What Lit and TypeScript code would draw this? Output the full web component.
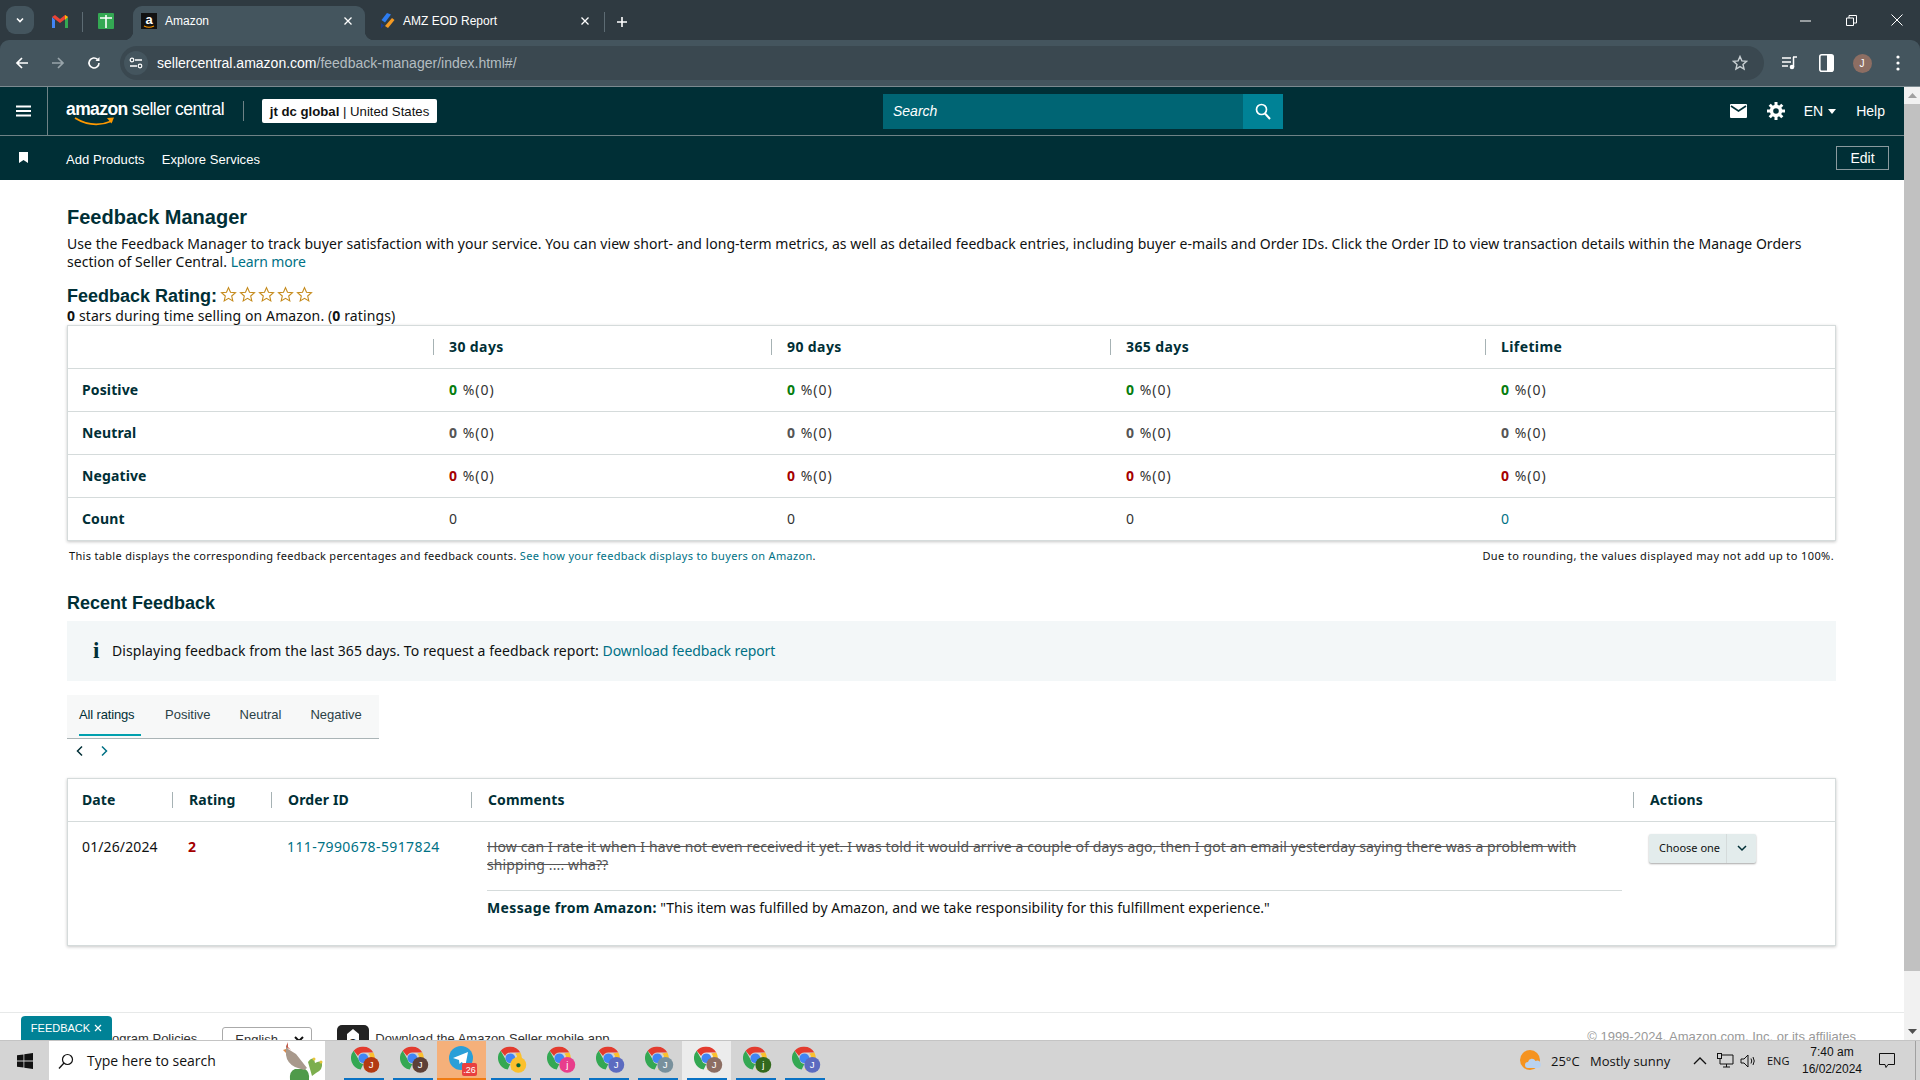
import { LitElement, html, css, svg } from 'lit';
import { customElement } from 'lit/decorators.js';

const star = svg`<path d="M8.5 1.6l2 4.6 5 .5-3.8 3.3 1.1 4.9-4.3-2.6-4.3 2.6 1.1-4.9L1.5 6.7l5-.5z" fill="#fff" stroke="#c58a1a" stroke-width="1.1"/>`;

const chromeIcon = (color: string, letter: string, text = '#fff') => html`
  <svg class="chrome" width="30" height="30" viewBox="0 0 34 34">
    <path d="M14 2a13 13 0 0 1 11.3 6.5H14a6.5 6.5 0 0 0-6 4L3 6.6A13 13 0 0 1 14 2z" fill="#e33b2e"/>
    <path d="M25.3 8.5A13 13 0 0 1 14.5 28l5.2-9a6.5 6.5 0 0 0-.2-9.5z" fill="#fbc02d"/>
    <path d="M3 6.6l5.6 9.7A6.5 6.5 0 0 0 14 21.5L11 27.7A13 13 0 0 1 3 6.6z" fill="#34a853"/>
    <circle cx="14" cy="15" r="5.5" fill="#4285f4"/>
    <circle cx="23" cy="22.5" r="9" fill=${color}/>
    <text x="23" y="26.5" font-size="11" text-anchor="middle" fill=${text} font-family="Liberation Sans, sans-serif">${letter}</text>
  </svg>`;

@customElement('app-root')
export class AppRoot extends LitElement {
  static styles = css`
    :host {
      display: flex;
      flex-direction: column;
      width: 1920px;
      height: 1080px;
      overflow: hidden;
      font-family: 'Liberation Sans', Arial, sans-serif;
      color: #002f36;
      background: #2f3a41;
    }
    svg { display: block; flex: none; }

    /* browser tabs */
    .tabstrip {
      height: 40px;
      background: #2f3a41;
      display: flex;
      align-items: flex-end;
      color: #fff;
      font-size: 12px;
      flex: none;
    }
    .tab-search {
      width: 28px;
      height: 28px;
      margin: 0 0 6px 6px;
      border-radius: 9px;
      background: #44555e;
      display: flex;
      align-items: center;
      justify-content: center;
    }
    .pinned {
      width: 24px;
      height: 34px;
      padding-bottom: 4px;
      box-sizing: border-box;
      display: flex;
      align-items: center;
      justify-content: center;
    }
    .strip-sep { width: 1px; height: 20px; background: #5d6b73; margin-bottom: 8px; }
    .tab {
      width: 232px;
      height: 34px;
      display: flex;
      align-items: center;
      padding: 0 12px 4px 8px;
      box-sizing: border-box;
      gap: 8px;
      position: relative;
    }
    .tab.second { width: 229px; padding-right: 10px; margin-left: 6px; }
    .tab.active { background: #44555e; border-radius: 9px 9px 0 0; margin-left: 15px; }
    .tab.active::before, .tab.active::after {
      content: '';
      position: absolute;
      bottom: 0;
      width: 9px;
      height: 9px;
    }
    .tab.active::before { left: -9px; background: radial-gradient(circle at 0 0, transparent 9px, #44555e 9.5px); }
    .tab.active::after { right: -9px; background: radial-gradient(circle at 100% 0, transparent 9px, #44555e 9.5px); }
    .tab-title { flex: 1; }
    .new-tab { margin: 0 0 12px 11px; }
    .win-controls { margin-left: auto; display: flex; align-self: flex-start; }
    .win-btn { width: 46px; height: 40px; display: flex; align-items: center; justify-content: center; }

    /* browser toolbar */
    .toolbar {
      height: 46px;
      background: #44555e;
      border-radius: 9px 9px 0 0;
      display: flex;
      align-items: center;
      flex: none;
      border-bottom: 1px solid #7c8a90;
      color: #fff;
    }
    .nav-btn { width: 36px; display: flex; justify-content: center; }
    .nav-btn:first-child { margin-left: 4px; }
    .omnibox {
      width: 1644px;
      height: 34px;
      margin-left: 8px;
      border-radius: 17px;
      background: #3a4850;
      display: flex;
      align-items: center;
      font-size: 14px;
      box-sizing: border-box;
    }
    .site-info {
      width: 24px;
      height: 24px;
      margin: 0 9px 0 4px;
      border-radius: 50%;
      background: #44555e;
      display: flex;
      align-items: center;
      justify-content: center;
    }
    .url-path { color: #b4bdc1; }
    .omni-star { margin-left: auto; margin-right: 16px; }
    .tool-btn { width: 36px; display: flex; justify-content: center; }
    .tool-btn.first { margin-left: 8px; }
    .avatar {
      width: 19px;
      height: 19px;
      border-radius: 50%;
      background: #8d6e63;
      font-size: 10px;
      display: flex;
      align-items: center;
      justify-content: center;
    }

    /* page area */
    .viewport { flex: 1; min-height: 0; display: flex; position: relative; background: #fff; }
    .page { flex: 1; min-width: 0; overflow: hidden; display: flex; flex-direction: column; }
    .scrollbar {
      width: 16px;
      background: #f1f1f1;
      display: flex;
      flex-direction: column;
      align-items: center;
      flex: none;
    }
    .scroll-arrow { height: 17px; display: flex; align-items: center; justify-content: center; }
    .thumb { width: 16px; height: 867px; background: #c1c1c1; }
    .scroll-arrow.down { margin-top: auto; }

    /* seller central header */
    .topbar {
      height: 48px;
      background: #002f36;
      border-bottom: 1px solid #6e8286;
      display: flex;
      align-items: center;
      color: #fff;
      flex: none;
    }
    .menu {
      width: 47px;
      height: 48px;
      border-right: 1px solid #6e8286;
      display: flex;
      align-items: center;
      justify-content: center;
      flex: none;
    }
    .logo { margin-left: 18px; position: relative; width: 160px; height: 32px; flex: none; }
    .logo-text { font-size: 17.5px; line-height: 24px; margin-top: 2px; letter-spacing: -0.5px; white-space: nowrap; }
    .logo-text b { letter-spacing: -0.6px; }
    .logo-smile { position: absolute; left: 8px; top: 21px; }
    .logo-sep { width: 1px; height: 20px; background: #6e8286; margin-left: 17px; }
    .account {
      margin-left: 18px;
      width: 175px;
      height: 24px;
      border-radius: 2px;
      background: #fff;
      color: #111;
      font-size: 13.2px;
      display: flex;
      align-items: center;
      justify-content: center;
      white-space: pre;
    }
    .search {
      margin-left: 446px;
      width: 400px;
      height: 35px;
      background: #006574;
      display: flex;
      flex: none;
    }
    .search-input { flex: 1; padding-left: 10px; font-size: 14px; font-style: italic; color: #fff; line-height: 35px; }
    .search-btn { width: 40px; background: #008296; display: flex; align-items: center; justify-content: center; }
    .top-right { margin-left: auto; display: flex; align-items: center; font-size: 14px; padding-right: 19px; }
    .lang { display: flex; align-items: center; gap: 4px; margin-left: 19px; }
    .caret { width: 0; height: 0; border: 4px solid transparent; border-top: 5px solid #fff; border-bottom: 0; margin-left: 1px; }
    .help { margin-left: 20px; }
    .gear { margin-left: 20px; }

    .subbar {
      height: 44px;
      background: #002f36;
      color: #fff;
      display: flex;
      align-items: center;
      font-size: 13px;
      flex: none;
      padding: 2px 0 0 19px;
      box-sizing: border-box;
    }
    .subbar span { margin-right: 17px; letter-spacing: 0.05px; }
    .bookmark { margin-right: 38px; margin-top: -3px; }
    .edit {
      margin-left: auto;
      margin-right: 15px;
      margin-top: -3px;
      width: 53px;
      height: 24px;
      box-sizing: border-box;
      border: 1px solid #8a9a9e;
      font-size: 14px;
      display: flex;
      align-items: center;
      justify-content: center;
    }

    /* content */
    .content {
      flex: none;
      padding: 25px 68px 0 67px;
      font-family: 'Noto Sans', sans-serif;
      font-size: 14px;
      line-height: 18px;
      color: #0f1111;
      height: 832px;
      box-sizing: border-box;
      letter-spacing: 0.12px;
    }
    h1, h2 { margin: 0; font-family: 'Liberation Sans', sans-serif; font-weight: 700; color: #002f36; letter-spacing: 0; }
    h1 { font-size: 20px; line-height: 24px; }
    h2 { font-size: 18px; line-height: 24px; }
    a { color: #007185; text-decoration: none; }
    .intro a, .info a { letter-spacing: -0.1px; }
    .intro { margin: 6px 0 0; letter-spacing: 0.04px; }
    .rating { margin-top: 13px; display: flex; align-items: center; gap: 3px; }
    .stars { display: flex; gap: 2px; margin-top: -4px; }
    .summary { margin-top: -1px; }

    .card {
      background: #fff;
      border: 1px solid #d5dbdb;
      box-shadow: 0 1px 3px rgba(0, 0, 0, 0.22);
    }
    .row { display: grid; height: 43px; border-bottom: 1px solid #d5dbdb; box-sizing: border-box; align-items: center; }
    .row:last-child { border-bottom: 0; }
    .metrics .row { grid-template-columns: 365px 338px 339px 375px 1fr; }
    .metrics .row:last-child { height: 42px; }
    .metrics .th { letter-spacing: 0.4px; }
    .th { font-weight: 700; color: #002f36; }
    .cell-head { border-left: 1px solid #a6b2b4; padding-left: 15px; height: 16px; line-height: 16px; }
    .label { padding-left: 14px; font-weight: 700; color: #002f36; }
    .val { padding-left: 16px; color: #333; letter-spacing: 1px; }
    .good { color: #067d0e; font-weight: 700; }
    .plain { color: #555; font-weight: 700; }
    .bad { color: #a50000; font-weight: 700; }

    .notes {
      display: flex;
      justify-content: space-between;
      margin-top: 6px;
      padding: 0 2px;
      font-size: 11px;
      letter-spacing: 0.32px;
    }
    .notes div:last-child { letter-spacing: 0.4px; }
    .recent { margin-top: 26px; }
    .info {
      margin-top: 6px;
      height: 60px;
      background: #f3f7f8;
      display: flex;
      align-items: center;
      padding-left: 26px;
      letter-spacing: 0.07px;
    }
    .info-i {
      font-family: 'Liberation Serif', serif;
      font-weight: 700;
      font-size: 23px;
      color: #002f36;
      width: 19px;
    }
    .tabs {
      margin-top: 14px;
      width: 312px;
      height: 44px;
      background: #f7f8f8;
      border-bottom: 1px solid #aab4b6;
      display: flex;
      box-sizing: border-box;
      font-family: 'Liberation Sans', sans-serif;
      font-size: 13px;
      color: #2b4146;
      padding-left: 12px;
      gap: 29px;
      letter-spacing: 0;
    }
    .rt { height: 39px; line-height: 39px; box-sizing: border-box; }
    .rt.on { color: #002f36; box-shadow: 0 2px 0 #00a0ae; width: 62px; margin-right: -5px; letter-spacing: -0.15px; }
    .pager { display: flex; gap: 14px; padding-left: 8px; height: 24px; align-items: center; }

    .table2 { margin-top: 15px; height: 168px; box-sizing: border-box; }
    .table2 .row, .entry { grid-template-columns: 104px 99px 200px 1162px 1fr; }
    .table2 .cell-head:first-child { border-left: 0; padding-left: 14px; }
    .table2 .cell-head { padding-left: 16px; }
    .entry { display: grid; padding-top: 16px; }
    .entry > div { padding-left: 16px; }
    .entry > div:first-child { padding-left: 14px; }
    .order { letter-spacing: 0.4px; }
    .struck { text-decoration: line-through; color: #555; }
    .entry > .comment { padding-right: 11px; }
    .comment hr { border: 0; border-top: 1px solid #d5dbdb; margin: 16px 0 0; }
    .from { margin-top: 8px; letter-spacing: 0; }
    .from b { color: #002f36; letter-spacing: 0.35px; }
    .rate-val { color: #a50000; font-weight: 700; }
    .choose {
      width: 107px;
      height: 29px;
      margin-top: -4px;
      background: #e3ecec;
      border-radius: 2px;
      box-shadow: 0 1px 2px rgba(0, 0, 0, 0.35);
      display: flex;
      font-size: 11px;
      letter-spacing: 0;
      line-height: 28px;
    }
    .choose-text { width: 78px; padding-left: 10px; box-sizing: border-box; border-right: 1px solid #d5dbdb; }
    .choose-arrow { flex: 1; display: flex; align-items: center; justify-content: center; }

    .footer {
      flex: none;
      border-top: 1px solid #e7e9e9;
      height: 120px;
      padding: 18px 48px 0 99px;
      display: flex;
      align-items: flex-start;
      font-size: 13px;
      color: #333;
      box-sizing: border-box;
    }
    .sel {
      margin: -4px 0 0 25px;
      width: 90px;
      height: 24px;
      box-sizing: border-box;
      border: 1px solid #aaa;
      border-radius: 3px;
      padding: 3px 7px 0 12px;
      line-height: 18px;
      display: flex;
      justify-content: space-between;
    }
    .sel svg { margin-top: 5px; }
    .app-a { margin: -6px 6px 0 25px; }
    .copy { margin: -2px 0 0 auto; color: #999; }

    .feedback {
      position: absolute;
      left: 21px;
      bottom: 0;
      width: 91px;
      height: 24px;
      background: #008296;
      color: #fff;
      border-radius: 4px 4px 0 0;
      font-size: 11px;
      display: flex;
      align-items: center;
      justify-content: center;
      gap: 4px;
    }

    /* windows taskbar */
    .taskbar {
      height: 40px;
      background: #d4d4d4;
      display: flex;
      align-items: center;
      flex: none;
      border-top: 1px solid #c4c4c4;
      box-sizing: border-box;
      font-family: 'Open Sans', 'Noto Sans', sans-serif;
      color: #111;
    }
    .start { width: 49px; display: flex; justify-content: center; flex: none; }
    .task-search {
      width: 276px;
      height: 39px;
      background: #fff;
      display: flex;
      align-items: center;
      font-size: 14px;
      padding-left: 9px;
      box-sizing: border-box;
      gap: 13px;
      position: relative;
      flex: none;
    }
    .bird { position: absolute; right: 0; top: 0; }
    .apps { display: flex; margin-left: 14px; flex: none; }
    .app {
      width: 49px;
      height: 39px;
      display: flex;
      align-items: center;
      justify-content: center;
      box-sizing: border-box;
      background: linear-gradient(#0a72c4, #0a72c4) bottom center / 40px 2px no-repeat;
      padding-left: 5px;
    }
    .app .chrome { margin-top: -2px; }
    .app.tg {
      background: linear-gradient(#f07b12, #f07b12) bottom center / 100% 2px no-repeat, #f5b07a;
      padding-left: 0;
    }
    .app.sel-app { background: linear-gradient(#0a72c4, #0a72c4) bottom center / 40px 2px no-repeat, #ececec; }
    .tray { margin-left: auto; display: flex; align-items: center; font-size: 13px; height: 39px; }
    .sun { margin-right: 9px; }
    .weather { width: 39px; }
    .mostly { width: 98px; }
    .tray-ic { display: flex; justify-content: center; }
    .eng { font-size: 11px; margin: 0 5px 0 9px; width: 23px; }
    .clock { font-family: 'Liberation Sans', sans-serif; font-size: 12px; line-height: 17px; text-align: center; width: 74px; }
    .notify { width: 36px; display: flex; justify-content: center; }
    .show-desktop { width: 1px; height: 39px; background: #a0a0a0; margin: 0 4px 0 10px; }
  `;

  renderMetricRow(label: string, cls: string) {
    return html`<div class="row">
      <div class="label">${label}</div>
      ${[0, 1, 2, 3].map(() => html`<div class="val"><span class=${cls}>0</span> %(0)</div>`)}
    </div>`;
  }

  renderChrome() {
    return html`
      <div class="tabstrip">
        <div class="tab-search">
          <svg width="12" height="12" viewBox="0 0 12 12"><path d="M3 4.5l3 3 3-3" fill="none" stroke="#fff" stroke-width="1.6"/></svg>
        </div>
        <div class="pinned" style="margin-left:14px">
          <svg width="16" height="13" viewBox="0 0 16 13">
            <path d="M0 2v11h3V5z" fill="#4285f4"/><path d="M16 2v11h-3V5z" fill="#34a853"/>
            <path d="M0 2l3-2 5 4 5-4 3 2-8 6z" fill="#ea4335"/><path d="M13 0l3 2-3 3z" fill="#fbbc04"/>
          </svg>
        </div>
        <div class="strip-sep" style="margin-left:10px"></div>
        <div class="pinned" style="margin-left:11px">
          <svg width="16" height="16" viewBox="0 0 16 16"><rect width="16" height="16" rx="1" fill="#34a853"/><path d="M2 5h12M8 2v13" stroke="#fff" stroke-width="1.6"/></svg>
        </div>
        <div class="tab active">
          <svg width="16" height="16" viewBox="0 0 16 16"><rect width="16" height="16" fill="#111"/><text x="8" y="11" font-size="13" font-weight="700" text-anchor="middle" fill="#fff" font-family="Liberation Sans">a</text><path d="M3 13q5 2.5 10 0" fill="none" stroke="#f90" stroke-width="1.2"/></svg>
          <span class="tab-title">Amazon</span>
          <svg width="10" height="10" viewBox="0 0 10 10"><path d="M1.5 1.5l7 7M8.5 1.5l-7 7" stroke="#fff" stroke-width="1.3"/></svg>
        </div>
        <div class="tab second">
          <svg width="16" height="18" viewBox="0 0 16 18">
            <path d="M8 1l4 1.5-6 8L2.5 8z" fill="#2d7cf0"/><path d="M13 6l2.5 2-6.500 8-3-2z" fill="#f59a23"/><path d="M2 11l3 2.5-3 3z" fill="#1b3b8f"/>
          </svg>
          <span class="tab-title">AMZ EOD Report</span>
          <svg width="10" height="10" viewBox="0 0 10 10"><path d="M1.5 1.5l7 7M8.5 1.5l-7 7" stroke="#fff" stroke-width="1.3"/></svg>
        </div>
        <div class="strip-sep" style="margin-left:4px"></div>
        <svg class="new-tab" width="12" height="12" viewBox="0 0 12 12"><path d="M6 1v10M1 6h10" stroke="#fff" stroke-width="1.6"/></svg>
        <div class="win-controls">
          <div class="win-btn"><svg width="11" height="11" viewBox="0 0 11 11"><path d="M0 6h11" stroke="#fff"/></svg></div>
          <div class="win-btn"><svg width="11" height="11" viewBox="0 0 11 11"><path d="M.5 3h7v7.5h-7zM3 3V.5h7.5V8H8" fill="none" stroke="#fff"/></svg></div>
          <div class="win-btn"><svg width="12" height="12" viewBox="0 0 12 12"><path d="M.5.5l11 11M11.5.5l-11 11" stroke="#fff"/></svg></div>
        </div>
      </div>
      <div class="toolbar">
        <div class="nav-btn"><svg width="14" height="14" viewBox="0 0 14 14"><path d="M13 7H2M7 2L2 7l5 5" fill="none" stroke="#fff" stroke-width="1.7"/></svg></div>
        <div class="nav-btn"><svg width="14" height="14" viewBox="0 0 14 14"><path d="M1 7h11M7 2l5 5-5 5" fill="none" stroke="#98a4aa" stroke-width="1.7"/></svg></div>
        <div class="nav-btn"><svg width="14" height="14" viewBox="0 0 14 14"><path d="M12 7a5 5 0 1 1-1.5-3.6" fill="none" stroke="#fff" stroke-width="1.6"/><path d="M12.5 1v4h-4z" fill="#fff"/></svg></div>
        <div class="omnibox">
          <div class="site-info">
            <svg width="14" height="12" viewBox="0 0 14 12"><circle cx="3" cy="3" r="1.8" fill="none" stroke="#fff" stroke-width="1.2"/><path d="M6 3h7M1 9h7" stroke="#fff" stroke-width="1.4"/><circle cx="11" cy="9" r="1.8" fill="none" stroke="#fff" stroke-width="1.2"/></svg>
          </div>
          <span>sellercentral.amazon.com<span class="url-path">/feedback-manager/index.html#/</span></span>
          <svg class="omni-star" width="16" height="16" viewBox="0 0 17 17"><path d="M8.5 1.6l2 4.6 5 .5-3.8 3.3 1.1 4.9-4.3-2.6-4.3 2.6 1.1-4.9L1.5 6.7l5-.5z" fill="none" stroke="#c9d0d3" stroke-width="1.5"/></svg>
        </div>
        <div class="tool-btn first"><svg width="16" height="14" viewBox="0 0 16 14"><path d="M0 2h9M0 6h9M0 10h6" stroke="#fff" stroke-width="1.5"/><path d="M11 1h4M11.5 1v10" stroke="#fff" stroke-width="1.5"/><circle cx="10" cy="11" r="2.3" fill="#fff"/></svg></div>
        <div class="tool-btn"><svg width="15" height="18" viewBox="0 0 15 18"><rect x=".8" y=".8" width="13.4" height="16.4" rx="2" fill="none" stroke="#fff" stroke-width="1.6"/><rect x="8" y="1" width="6" height="16" fill="#fff"/></svg></div>
        <div class="tool-btn"><div class="avatar">J</div></div>
        <div class="tool-btn"><svg width="4" height="16" viewBox="0 0 4 16"><circle cx="2" cy="2" r="1.6" fill="#fff"/><circle cx="2" cy="8" r="1.6" fill="#fff"/><circle cx="2" cy="14" r="1.6" fill="#fff"/></svg></div>
      </div>`;
  }

  renderHeader() {
    return html`
      <div class="topbar">
        <div class="menu"><svg width="15" height="12" viewBox="0 0 15 12"><path d="M0 1.5h15M0 6h15M0 10.5h15" stroke="#fff" stroke-width="2"/></svg></div>
        <div class="logo">
          <div class="logo-text"><b>amazon</b> seller central</div>
          <svg class="logo-smile" width="44" height="11" viewBox="0 0 44 11"><path d="M1 2q18 11 37 3" fill="none" stroke="#f90" stroke-width="1.8"/><path d="M33 2l7-.5-2.5 6z" fill="#f90"/></svg>
        </div>
        <div class="logo-sep"></div>
        <div class="account"><b>jt dc global</b> | United States</div>
        <div class="search">
          <div class="search-input">Search</div>
          <div class="search-btn"><svg width="16" height="17" viewBox="0 0 16 17"><circle cx="6.5" cy="6.5" r="5" fill="none" stroke="#fff" stroke-width="1.7"/><path d="M10 10.5l5 5.5" stroke="#fff" stroke-width="2"/></svg></div>
        </div>
        <div class="top-right">
          <svg width="17" height="14" viewBox="0 0 17 14"><rect width="17" height="14" rx="1" fill="#fff"/><path d="M1 2l7.5 5L16 2" fill="none" stroke="#002f36" stroke-width="1.6"/></svg>
          <svg class="gear" width="18" height="18" viewBox="0 0 18 18"><circle cx="9" cy="9" r="4.5" fill="none" stroke="#fff" stroke-width="3.4"/><path d="M9 0v4M9 14v4M0 9h4M14 9h4M2.7 2.7l2.8 2.8M12.5 12.5l2.8 2.8M15.3 2.7l-2.8 2.8M5.5 12.5l-2.8 2.8" stroke="#fff" stroke-width="3"/></svg>
          <div class="lang">EN <span class="caret"></span></div>
          <div class="help">Help</div>
        </div>
      </div>
      <div class="subbar">
        <svg class="bookmark" width="9" height="11" viewBox="0 0 9 11"><path d="M0 0h9v11L4.5 8 0 11z" fill="#fff"/></svg>
        <span>Add Products</span>
        <span>Explore Services</span>
        <div class="edit">Edit</div>
      </div>`;
  }

  renderContent() {
    return html`
      <div class="content">
        <h1>Feedback Manager</h1>
        <p class="intro">Use the Feedback Manager to track buyer satisfaction with your service. You can view short- and long-term metrics, as well as detailed feedback entries, including buyer e-mails and Order IDs. Click the Order ID to view transaction details within the Manage Orders section of Seller Central. <a>Learn more</a></p>
        <div class="rating">
          <h2>Feedback Rating:</h2>
          <div class="stars">${[0, 1, 2, 3, 4].map(() => html`<svg width="17" height="17" viewBox="0 0 17 17">${star}</svg>`)}</div>
        </div>
        <div class="summary"><b>0</b> stars during time selling on Amazon. (<b>0</b> ratings)</div>

        <div class="card metrics">
          <div class="row th">
            <div></div>
            <div class="cell-head">30 days</div>
            <div class="cell-head">90 days</div>
            <div class="cell-head">365 days</div>
            <div class="cell-head">Lifetime</div>
          </div>
          ${this.renderMetricRow('Positive', 'good')}
          ${this.renderMetricRow('Neutral', 'plain')}
          ${this.renderMetricRow('Negative', 'bad')}
          <div class="row">
            <div class="label">Count</div>
            <div class="val">0</div>
            <div class="val">0</div>
            <div class="val">0</div>
            <div class="val"><a>0</a></div>
          </div>
        </div>
        <div class="notes">
          <div>This table displays the corresponding feedback percentages and feedback counts. <a>See how your feedback displays to buyers on Amazon</a>.</div>
          <div>Due to rounding, the values displayed may not add up to 100%.</div>
        </div>

        <h2 class="recent">Recent Feedback</h2>
        <div class="info">
          <span class="info-i">i</span>
          <span>Displaying feedback from the last 365 days. To request a feedback report: <a>Download feedback report</a></span>
        </div>
        <div class="tabs">
          <div class="rt on">All ratings</div>
          <div class="rt">Positive</div>
          <div class="rt">Neutral</div>
          <div class="rt">Negative</div>
        </div>
        <div class="pager">
          <svg width="10" height="12" viewBox="0 0 10 12"><path d="M7 1.5L2.5 6 7 10.5" fill="none" stroke="#002f36" stroke-width="1.5"/></svg>
          <svg width="10" height="12" viewBox="0 0 10 12"><path d="M3 1.5L7.5 6 3 10.5" fill="none" stroke="#007185" stroke-width="1.5"/></svg>
        </div>

        <div class="card table2">
          <div class="row th">
            <div class="cell-head">Date</div>
            <div class="cell-head">Rating</div>
            <div class="cell-head">Order ID</div>
            <div class="cell-head">Comments</div>
            <div class="cell-head">Actions</div>
          </div>
          <div class="entry">
            <div>01/26/2024</div>
            <div class="rate-val">2</div>
            <div class="order"><a>111-7990678-5917824</a></div>
            <div class="comment">
              <div class="struck">How can I rate it when I have not even received it yet. I was told it would arrive a couple of days ago, then I got an email yesterday saying there was a problem with shipping .... wha??</div>
              <hr />
              <div class="from"><b>Message from Amazon:</b> "This item was fulfilled by Amazon, and we take responsibility for this fulfillment experience."</div>
            </div>
            <div class="actions">
              <div class="choose">
                <div class="choose-text">Choose one</div>
                <div class="choose-arrow"><svg width="10" height="7" viewBox="0 0 10 7"><path d="M1 1l4 4 4-4" fill="none" stroke="#002f36" stroke-width="1.5"/></svg></div>
              </div>
            </div>
          </div>
        </div>
      </div>`;
  }

  renderTaskbar() {
    return html`
      <div class="taskbar">
        <div class="start"><svg width="16" height="16" viewBox="0 0 16 16"><path d="M0 2.3l6.5-.9v6.2H0zM7.3 1.3L16 0v7.6H7.3zM0 8.4h6.500v6.200L0 13.700zM7.300 8.400H16V16l-8.700-1.200z" fill="#111"/></svg></div>
        <div class="task-search">
          <svg width="16" height="16" viewBox="0 0 16 16"><circle cx="9.5" cy="6.5" r="5" fill="none" stroke="#111" stroke-width="1.2"/><path d="M6 10l-5 5.5" stroke="#111" stroke-width="1.3"/></svg>
          <span>Type here to search</span>
          <svg class="bird" width="47" height="39" viewBox="0 0 47 39">
            <path d="M30 21q3-5 6-3l1 4q5-3 7 0 1 7-6 10l-4 3z" fill="#7cae4e"/>
            <circle cx="36" cy="18" r="1.5" fill="#e8c63a"/><circle cx="43" cy="21" r="1.5" fill="#e8c63a"/>
            <path d="M12 39q-1-9 5-11h10q5 3 4 11z" fill="#4f9a4a"/>
            <path d="M8 3l2 5 8 5 11 14-3 2-9-3q-8-4-9-12z" fill="#a8998c"/>
            <path d="M10 1L8 6l5 3-3-3z" fill="#c65a4a"/>
            <path d="M8 8l-3 1 3 3z" fill="#d98a4a"/>
          </svg>
        </div>
        <div class="apps">
          <div class="app">${chromeIcon('#b33a12', 'J')}</div>
          <div class="app">${chromeIcon('#5d4037', 'J')}</div>
          <div class="app tg">
            <svg width="30" height="32" viewBox="0 0 30 32">
              <circle cx="14" cy="13" r="12" fill="#2a9fd8"/>
              <path d="M6 13l15-6-2.5 13-4-3-2 2-.5-4z" fill="#fff"/>
              <rect x="15" y="18" width="15" height="13" rx="2" fill="#e84040"/>
              <text x="22.5" y="28" font-size="9" text-anchor="middle" fill="#fff" font-family="Liberation Sans">.26</text>
            </svg>
          </div>
          <div class="app">${chromeIcon('#fbc02d', '●', '#063')}</div>
          <div class="app">${chromeIcon('#e83e8c', 'j')}</div>
          <div class="app">${chromeIcon('#5c6bc0', 'J')}</div>
          <div class="app">${chromeIcon('#78909c', 'J')}</div>
          <div class="app sel-app">${chromeIcon('#8d6e63', 'J')}</div>
          <div class="app">${chromeIcon('#33691e', 'j')}</div>
          <div class="app">${chromeIcon('#5c6bc0', 'J')}</div>
        </div>
        <div class="tray">
          <svg class="sun" width="22" height="22" viewBox="0 0 22 22"><circle cx="10" cy="10" r="10" fill="#f5931f"/><path d="M8 18a3 3 0 0 1 0-6 4 4 0 0 1 7.5-1 3.5 3.5 0 0 1 3 7z" fill="#b9d2ef"/></svg>
          <span class="weather">25°C</span>
          <span class="mostly">Mostly sunny</span>
          <div class="tray-ic" style="width:24px"><svg width="14" height="8" viewBox="0 0 14 8"><path d="M1 7l6-6 6 6" fill="none" stroke="#111" stroke-width="1.3"/></svg></div>
          <div class="tray-ic" style="width:26px"><svg width="17" height="15" viewBox="0 0 17 15"><path d="M3 2h13v9H3zM9.5 11v3M6 14h7" fill="none" stroke="#111"/><rect x=".5" y=".5" width="4" height="5" fill="#d4d4d4" stroke="#111"/></svg></div>
          <div class="tray-ic" style="width:20px"><svg width="17" height="14" viewBox="0 0 17 14"><path d="M1 5h3l4-4v12L4 9H1zM11 4.5q1.5 2.5 0 5M13 3q2.5 4 0 8" fill="none" stroke="#111"/></svg></div>
          <span class="eng">ENG</span>
          <div class="clock">7:40 am<br />16/02/2024</div>
          <div class="notify"><svg width="16" height="15" viewBox="0 0 16 15"><path d="M.5.5h15v11H9l-2 3-1-3H.5z" fill="none" stroke="#111"/></svg></div>
          <div class="show-desktop"></div>
        </div>
      </div>`;
  }

  render() {
    return html`
      ${this.renderChrome()}
      <div class="viewport">
        <div class="page">
          ${this.renderHeader()}
          ${this.renderContent()}
          <div class="footer">
            <span>Program Policies</span>
            <div class="sel">English<svg width="10" height="7" viewBox="0 0 10 7"><path d="M1 1l4 4 4-4" fill="none" stroke="#111" stroke-width="2"/></svg></div>
            <svg class="app-a" width="32" height="32" viewBox="0 0 32 32"><rect width="32" height="32" rx="5" fill="#222"/><path d="M16 4l6 5v18H10V9z" fill="#fff"/><text x="16" y="22" font-size="15" font-weight="700" text-anchor="middle" fill="#222" font-family="Liberation Sans">a</text></svg>
            <span>Download the Amazon Seller mobile app</span>
            <span class="copy">© 1999-2024, Amazon.com, Inc. or its affiliates</span>
          </div>
        </div>
        <div class="scrollbar">
          <div class="scroll-arrow"><svg width="9" height="5" viewBox="0 0 9 5"><path d="M4.5 0L9 5H0z" fill="#a0a0a0"/></svg></div>
          <div class="thumb"></div>
          <div class="scroll-arrow down"><svg width="9" height="5" viewBox="0 0 9 5"><path d="M0 0h9L4.5 5z" fill="#505050"/></svg></div>
        </div>
        <div class="feedback"><span>FEEDBACK</span><svg width="8" height="8" viewBox="0 0 8 8"><path d="M1 1l6 6M7 1L1 7" stroke="#fff" stroke-width="1.2"/></svg></div>
      </div>
      ${this.renderTaskbar()}
    `;
  }
}
